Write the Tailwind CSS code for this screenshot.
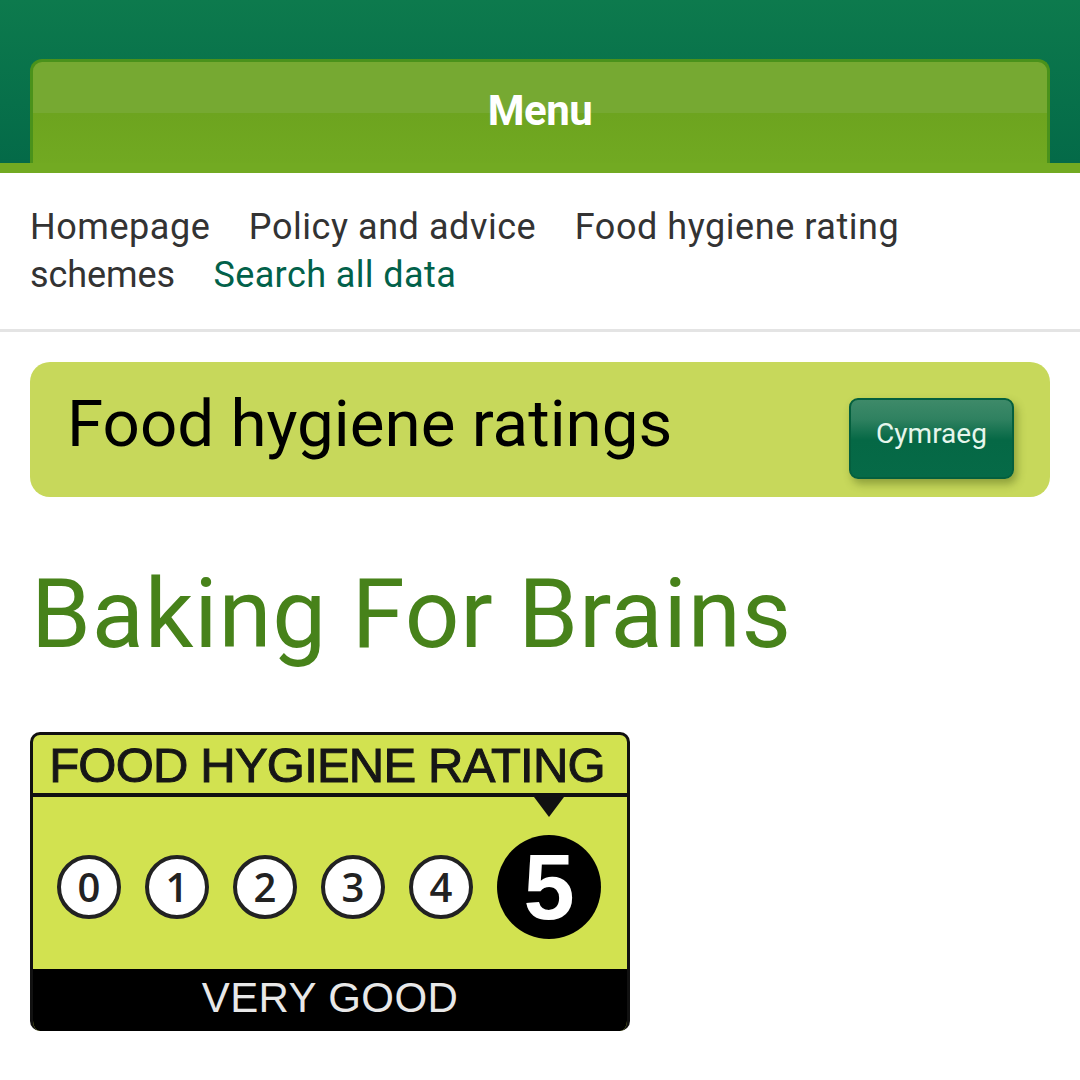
<!doctype html>
<html>
  <head>
    <title>Baking For Brains</title>
    <script src="https://cdn.jsdelivr.net/npm/@tailwindcss/browser@4"></script>
  </head>

  <body class="bg-white font-['Roboto',sans-serif]">
    <!-- Header with menu tab -->
    <header class="h-[173px] bg-[#72aa22]">
      <div class="h-[163px] px-[30px] pt-[59px] bg-gradient-to-b from-[#0d7a4d] to-[#046a48]">
        <div class="h-[114px] rounded-t-[12px] border-x-[3px] border-t-[3px] border-[#4a921b] bg-[linear-gradient(#76a932_0,#76a932_46%,#6da41f_46%,#72aa22_100%)] flex justify-center pt-[25px] relative">
          <span class="text-[42px] leading-[48px] font-bold text-white tracking-[-0.5px]">Menu</span>
          <div class="absolute left-[-3px] right-[-3px] bottom-0 h-[10px] bg-[#72aa22]"></div>
        </div>
      </div>
    </header>

    <!-- Breadcrumbs -->
    <nav class="h-[159px] px-[30px] pt-[30px] border-b-[3px] border-[#e4e4e4] text-[36px] leading-[48px] text-[#333333] tracking-[0.55px]">
      <a class="mr-[29px]">Homepage</a>
      <a class="mr-[29px]">Policy and advice</a>
      <a class="mr-[29px]">Food hygiene rating <span class="tracking-[-0.1px]">schemes</span></a>
      <a class="text-[#02614a] tracking-[0.4px]">Search all data</a>
    </nav>

    <main class="px-[30px]">
      <!-- Title banner -->
      <div class="mt-[30px] h-[135px] rounded-[20px] bg-[#c7d85b] flex items-start justify-between pl-[37px] pr-[36px]">
        <h2 class="mt-[23px] text-[65.5px] leading-[78px] text-black">Food hygiene ratings</h2>
        <button class="mt-[36px] w-[165px] h-[81px] pb-[10px] rounded-[9px] border-[2px] border-[#045f3e] bg-[linear-gradient(#3e8a69_0,#2f8160_25%,#056845_52%,#066a47_100%)] text-[28px] text-[#e6f6ec] shadow-[3px_5px_8px_rgba(70,90,20,0.45)]">Cymraeg</button>
      </div>

      <h1 class="mt-[61px] ml-[1px] text-[96px] leading-[112px] text-[#47821a] tracking-[0.85px]">Baking For Brains</h1>

      <!-- Rating badge -->
      <div class="mt-[62px] w-[600px] h-[299px] rounded-[10px] bg-[#d2e250] border-[3px] border-b-0 border-[#111111] overflow-hidden flex flex-col font-['Liberation_Sans',sans-serif]">
        <div class="h-[62px] shrink-0 pr-[6px] border-b-[4px] border-[#111111] text-center text-[49px] leading-[60px] text-[#161616] tracking-[-0.8px] [-webkit-text-stroke:1px_#161616]">FOOD HYGIENE RATING</div>
        <div class="relative grow flex items-center pl-[24px] pr-[26px] justify-between">
          <div class="absolute left-[501px] top-0 w-0 h-0 border-x-[15px] border-x-transparent border-t-[20px] border-t-[#111111]"></div>
          <div class="flex gap-[24px] mt-[8px] font-['Open_Sans',sans-serif]">
            <span class="w-[64px] h-[64px] rounded-full bg-white border-[4px] border-[#222222] flex items-center justify-center text-[40px] font-semibold text-[#222222]">0</span>
            <span class="w-[64px] h-[64px] rounded-full bg-white border-[4px] border-[#222222] flex items-center justify-center text-[40px] font-semibold text-[#222222]">1</span>
            <span class="w-[64px] h-[64px] rounded-full bg-white border-[4px] border-[#222222] flex items-center justify-center text-[40px] font-semibold text-[#222222]">2</span>
            <span class="w-[64px] h-[64px] rounded-full bg-white border-[4px] border-[#222222] flex items-center justify-center text-[40px] font-semibold text-[#222222]">3</span>
            <span class="w-[64px] h-[64px] rounded-full bg-white border-[4px] border-[#222222] flex items-center justify-center text-[40px] font-semibold text-[#222222]">4</span>
          </div>
          <span class="w-[104px] h-[104px] mt-[8px] rounded-full bg-black flex items-center justify-center text-[92px] font-bold text-white">5</span>
        </div>
        <div class="h-[62px] shrink-0 bg-black text-center text-[42px] leading-[58px] text-[#e8e8e8] tracking-[0.4px]">VERY GOOD</div>
      </div>
    </main>
  </body>
</html>
